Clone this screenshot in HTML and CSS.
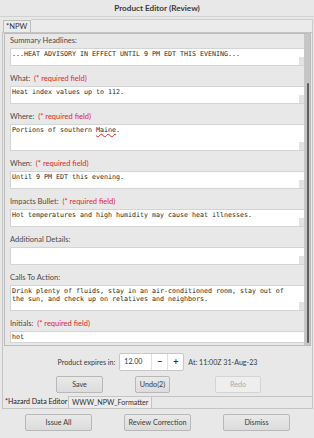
FILE: index.html
```html
<!DOCTYPE html>
<html lang="en">
<head>
    <meta charset="UTF-8">
    <meta name="viewport" content="width=device-width, initial-scale=1.0">
    <title>Product Editor (Review)</title>
    <link rel="stylesheet" href="styles.css">
</head>
<body>
    <div class="titlebar">Product Editor (Review)</div>
    <div class="window">
        <div class="tabbar">
            <div class="tab">*NPW</div>
            <div class="tab-fill"></div>
        </div>
        <div class="page">
            <div class="scroll">
                <div class="fields">
                    <div class="field">
                        <div class="label">Summary Headlines:</div>
                        <div class="text h18">...HEAT ADVISORY IN EFFECT UNTIL 9 PM EDT THIS EVENING...</div>
                    </div>
                    <div class="field">
                        <div class="label">What: <span class="req">(* required field)</span></div>
                        <div class="text h18">Heat index values up to 112.</div>
                    </div>
                    <div class="field">
                        <div class="label">Where: <span class="req">(* required field)</span></div>
                        <div class="text h27">Portions of southern <span class="typo">Maine</span>.</div>
                    </div>
                    <div class="field">
                        <div class="label">When: <span class="req">(* required field)</span></div>
                        <div class="text h18">Until 9 PM EDT this evening.</div>
                    </div>
                    <div class="field">
                        <div class="label">Impacts Bullet: <span class="req">(* required field)</span></div>
                        <div class="text h18">Hot temperatures and high humidity may cause heat illnesses.</div>
                    </div>
                    <div class="field">
                        <div class="label">Additional Details:</div>
                        <div class="text h18"></div>
                    </div>
                    <div class="field">
                        <div class="label">Calls To Action:</div>
                        <div class="text h26">Drink plenty of fluids, stay in an air-conditioned room, stay out of<br>the sun, and check up on relatives and neighbors.</div>
                    </div>
                    <div class="field">
                        <div class="label">Initials: <span class="req">(* required field)</span></div>
                        <div class="line-input">hot</div>
                    </div>
                </div>
                <div class="scrollbar"><div class="thumb"></div></div>
            </div>

            <div class="expires">
                <span>Product expires in:</span>
                <div class="spin">
                    <span class="spin-value">12.00</span>
                    <span class="spin-btn">&minus;</span>
                    <span class="spin-btn">+</span>
                </div>
                <span>At: 11:00Z 31-Aug-23</span>
            </div>

            <div class="actions">
                <button class="btn save">Save</button>
                <button class="btn undo">Undo(2)</button>
                <button class="btn redo" disabled>Redo</button>
            </div>
        </div>
        <div class="bottom-tabs">
            <div class="btab selected">*Hazard Data Editor</div>
            <div class="btab other">WWW_NPW_Formatter</div>
            <div class="btab-fill"></div>
        </div>
    </div>
    <div class="footer">
        <button class="btn wide">Issue All</button>
        <button class="btn wide">Review Correction</button>
        <button class="btn wide">Dismiss</button>
    </div>
</body>
</html>
```

FILE: styles.css
```css
body {
    margin: 0;
    background: #e8e8e8;
    font-family: Lato, "Open Sans", sans-serif;
    font-size: 7.5px;
    color: #4a4a4a;
}
.titlebar {
    height: 16px;
    line-height: 16px;
    text-align: center;
    font-size: 8.2px;
    font-weight: bold;
    color: #3a3a3a;
    border-bottom: 1px solid #d2d2d2;
}
.window {
    margin: 0 1px 0 2px;
}
.tabbar {
    display: flex;
    align-items: flex-end;
    height: 15px;
}
.tab {
    height: 11px;
    line-height: 11px;
    margin-left: 1px;
    padding: 0 3px 0 2px;
    border: 1px solid #bdbdbd;
    border-bottom: none;
    background: #ececec;
    color: #333;
}
.tab-fill {
    flex: 1;
    height: 12px;
    border-top: 1px solid #cdcdcd;
    border-right: 1px solid #cdcdcd;
    background: #ebebeb;
}
.page {
    border: 1px solid #c4c4c4;
    border-bottom: none;
    padding: 0 1px 3px 1px;
}
.scroll {
    display: flex;
    height: 311px;
    border: 1px solid #bcbcbc;
}
.fields {
    flex: 1;
    overflow: hidden;
    padding-left: 5px;
}
.field {
    margin-bottom: 6px;
}
.label {
    height: 13px;
    line-height: 13px;
    margin-bottom: 1px;
    white-space: nowrap;
}
.req {
    color: #e2262c;
    margin-left: 2px;
}
.text {
    background: linear-gradient(#e2e2e2, #e2e2e2) no-repeat right bottom / 5px 8px, #ffffff;
    border: 1px solid #d4d4d4;
    border-right: none;
    box-sizing: border-box;
    padding: 0.5px 1px;
    font-family: "DejaVu Sans Mono", monospace;
    font-size: 6.65px;
    line-height: 8.5px;
    color: #1e1e1e;
    white-space: nowrap;
}
.h18 { height: 18px; }
.h26 { height: 26px; }
.h27 { height: 27px; }
.typo {
    text-decoration: underline wavy #e2262c;
    text-decoration-thickness: 0.5px;
}
.line-input {
    height: 12px;
    box-sizing: border-box;
    background: #ffffff;
    border: 1px solid #d4d4d4;
    border-right: none;
    padding: 0 1px;
    font-family: "DejaVu Sans Mono", monospace;
    font-size: 6.65px;
    line-height: 10px;
    color: #1e1e1e;
}
.scrollbar {
    width: 6px;
    background: #c6c6c6;
    display: flex;
    flex-direction: column;
    align-items: flex-end;
    padding-top: 49px;
    padding-bottom: 2px;
}
.thumb {
    flex: 1;
    width: 2px;
    margin-right: 1px;
    background: #5e5e5e;
    border-radius: 1px;
}
.expires {
    display: flex;
    align-items: center;
    justify-content: center;
    gap: 4px;
    margin-top: 7px;
    height: 18px;
    font-size: 7.1px;
    color: #3a3a3a;
}
.spin {
    display: flex;
    height: 18px;
    box-sizing: border-box;
    border: 1px solid #c8c8c8;
    border-radius: 2px;
    background: #ffffff;
    line-height: 16px;
}
.spin-value {
    width: 27px;
    padding-left: 4px;
    color: #333;
}
.spin-btn {
    width: 15px;
    text-align: center;
    border-left: 1px solid #e0e0e0;
    font-size: 9px;
    font-weight: bold;
    color: #333;
}
.actions {
    display: flex;
    align-items: center;
    margin-top: 5px;
    padding-left: 52px;
}
.btn {
    height: 17px;
    box-sizing: border-box;
    padding: 0;
    border: 1px solid #b8b8b8;
    border-radius: 2px;
    background: linear-gradient(#e9e9e9, #dcdcdc);
    font-family: Lato, "Open Sans", sans-serif;
    font-size: 7.2px;
    line-height: 15px;
    white-space: nowrap;
    color: #3a3a3a;
}
.save { width: 47px; }
.undo { width: 35px; margin-left: 32px; }
.redo {
    width: 46px;
    margin-left: 45px;
    background: #eeeeee;
    border-color: #d4d4d4;
    color: #aaaaaa;
}
.bottom-tabs {
    display: flex;
    height: 13px;
    font-size: 7.1px;
}
.btab {
    box-sizing: border-box;
    height: 13px;
    line-height: 12px;
    border: 1px solid #c4c4c4;
    border-left: none;
    background: #ececec;
    color: #333;
    white-space: nowrap;
}
.selected {
    width: 67px;
    padding-left: 2px;
    border-top: none;
    border-left: 1px solid #c4c4c4;
    background: #e8e8e8;
    color: #222;
}
.other {
    width: 83px;
    padding-left: 3px;
}
.btab-fill {
    flex: 1;
    border: 1px solid #c4c4c4;
    border-left: none;
}
.footer {
    display: flex;
    justify-content: center;
    gap: 32px;
    margin-top: 5px;
    padding-left: 1px;
}
.wide {
    width: 67px;
    height: 17px;
}
```
